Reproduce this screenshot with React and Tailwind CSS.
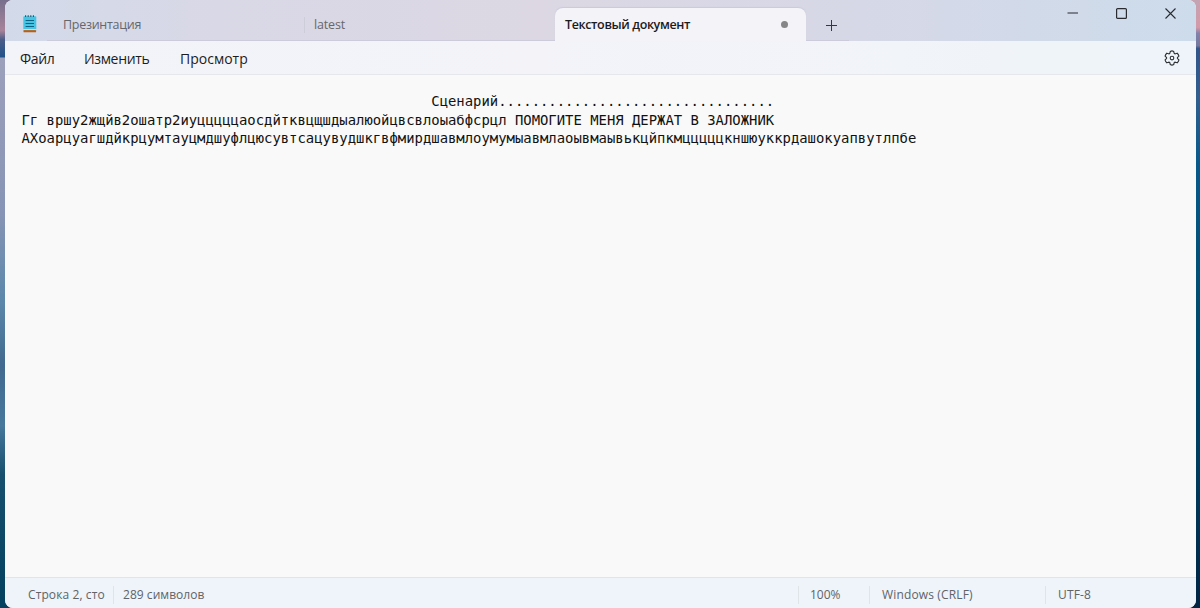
import React from "react";

const documentLines = [
  " ".repeat(49) + "Сценарий.................................",
  "Гг вршу2жщйв2ошатр2иуцццццаосдйтквцщшдыалюойцвсвлоыабфсрцл ПОМОГИТЕ МЕНЯ ДЕРЖАТ В ЗАЛОЖНИК",
  "АХоарцуагшдйкрцумтауцмдшуфлцюсувтсацувудшкгвфмирдшавмлоумумыавмлаоывмаывькцйпкмцццццкншюуккрдашокуапвутлпбе",
];

const NotepadIcon = () => (
  <svg width="14" height="18" viewBox="0 0 14 18" className="shrink-0">
    <rect x="0.5" y="15" width="12.6" height="2.3" rx="0.6" fill="#b5611b" />
    <rect x="0.3" y="1.2" width="13" height="13.4" rx="0.8" fill="#45c4e4" />
    <rect x="0.5" y="14.2" width="12.6" height="0.9" fill="#e4ddd8" />
    <path d="M2.6 0.2v1.9M5.2 0.2v1.9M7.8 0.2v1.9M10.4 0.2v1.9" stroke="#1b5570" strokeWidth="1.1" />
    <path d="M2.6 5.5h8.4M2.6 8.5h8.4M2.6 11.5h8.4" stroke="#0d6285" strokeWidth="1.1" />
  </svg>
);

const GearIcon = () => (
  <svg width="16" height="16" viewBox="0 0 16 16" fill="none" stroke="#303336" strokeWidth="1.15" strokeLinejoin="round">
    <path d="M6.3 1.4Q8 .4 9.7 1.4L10.1 3.2Q10.6 3.9 11.4 3.8L13.2 3.2Q14.6 4.4 14.9 6.1L13.6 7.4Q13.2 8 13.6 8.6L14.9 9.9Q14.6 11.6 13.2 12.8L11.4 12.2Q10.6 12.1 10.1 12.8L9.7 14.6Q8 15.6 6.3 14.6L5.9 12.8Q5.4 12.1 4.6 12.2L2.8 12.8Q1.4 11.6 1.1 9.9L2.4 8.6Q2.8 8 2.4 7.4L1.1 6.1Q1.4 4.4 2.8 3.2L4.6 3.8Q5.4 3.9 5.9 3.2Z" />
    <circle cx="8" cy="8" r="1.8" />
  </svg>
);

const TitleBar = () => (
  <div className="flex h-[41px] shrink-0 bg-[linear-gradient(90deg,#d2daea_0%,#d9d8e6_18%,#dcd7e3_45%,#d6d8e7_72%,#cddceb_100%)] text-[12.5px]">
    <div className="flex w-[42px] pl-[18px] pt-[15px]">
      <NotepadIcon />
    </div>
    <div className="flex h-full w-[508px] items-center border-b border-[#cbcbdc] pt-2.5 text-[#66676c]">
      <div className="w-[257px] pl-4 tracking-[-0.28px]">Презинтация</div>
      <div className="h-4 w-px bg-[#cdccd9]" />
      <div className="pl-[9px] tracking-[-0.15px]">latest</div>
    </div>
    <div className="mt-2 flex w-[251px] items-center justify-between rounded-t-lg bg-[#f3f3f8] pl-[10px] pr-[18.5px] shadow-[0_-1px_1px_#cbcada]">
      <span className="pt-0.5 font-semibold tracking-[-0.37px] text-[#1b1b1d]">Текстовый документ</span>
      <span className="h-[7px] w-[7px] rounded-full bg-[#868689]" />
    </div>
    <div className="h-full w-[43px] border-b border-[#cbcbdc] pl-5 pt-5">
      <svg width="11" height="11" viewBox="0 0 11 11" stroke="#36373b">
        <path d="M5.5 0v11M0 5.5h11" />
      </svg>
    </div>
    <div className="flex flex-1 justify-end gap-[38px] pr-5 pt-2">
      <svg width="11" height="11" viewBox="0 0 11 11" stroke="#292b30">
        <path d="M0.5 5h10.5" />
      </svg>
      <svg width="11" height="11" viewBox="0 0 11 11" fill="none" stroke="#292b30" strokeWidth="1.2">
        <rect x="0.6" y="0.6" width="9.8" height="9.8" rx="1" />
      </svg>
      <svg width="11" height="11" viewBox="0 0 11 11" stroke="#292b30" strokeWidth="1.1">
        <path d="M0.5 0.5l10 10M10.5 0.5l-10 10" />
      </svg>
    </div>
  </div>
);

const MenuBar = () => (
  <div className="flex h-[34px] shrink-0 items-center border-b border-[#e5e7ec] bg-[linear-gradient(90deg,#f2f4f9_0%,#f3f3f8_45%,#f1f4f9_75%,#eef4f9_100%)] pl-[15px] pr-4 text-sm text-[#1d1d1f]">
    <div className="w-[64px] pt-[3px] tracking-[-0.4px]">Файл</div>
    <div className="w-[96px] pt-[3px] tracking-[-0.35px]">Изменить</div>
    <div className="pt-[3px]">Просмотр</div>
    <div className="ml-auto">
      <GearIcon />
    </div>
  </div>
);

const StatusBar = () => (
  <div className="flex h-[31px] shrink-0 items-center border-t border-[#e1e5ea] bg-[#eef4f9] pt-[3px] text-xs text-[#606367]">
    <div className="w-[108px] pl-[23px] tracking-[0.1px]">Строка 2, сто</div>
    <div className="h-[18px] w-px bg-[#dfe4e9]" />
    <div className="pl-[9px] tracking-[0.04px]">289 символов</div>
    <div className="ml-auto h-[18px] w-px bg-[#dfe4e9]" />
    <div className="w-[70px] pl-[11px]">100%</div>
    <div className="h-[18px] w-px bg-[#dfe4e9]" />
    <div className="w-[175px] pl-3 tracking-[0.15px]">Windows (CRLF)</div>
    <div className="h-[18px] w-px bg-[#dfe4e9]" />
    <div className="w-[150px] pl-3 tracking-[0.15px]">UTF-8</div>
  </div>
);

const App = () => {
  return (
    <div className="flex h-[608px] w-[1200px] justify-between overflow-hidden bg-[linear-gradient(180deg,#77708d_0%,#a7839a_5%,#4c5d87_6.5%,#22528a_9.3%,#9ca0bb_9.6%,#8794b5_35%,#5a87aa_50%,#42698f_60%,#46799c_70%,#17506f_78%,#02415f_100%)] font-['Open_Sans','Noto_Sans',sans-serif]">
      <div className="flex flex-1 bg-[linear-gradient(180deg,#c4a3b3_0%,#d39aa8_4.5%,#8082aa_5.5%,#74799f_7.5%,#32558a_8%,#315f8e_16%,#07598a_27%,#004d70_50%,#003e60_75%,#002443_100%)] bg-[length:10px_100%] bg-right bg-no-repeat pl-[5px]">
        <div className="flex h-full w-[1191px] flex-col overflow-hidden rounded-lg bg-[#f9f9f9]">
          <TitleBar />
          <MenuBar />
          <div className="flex-1 whitespace-pre pl-[16.5px] pt-[17px] font-['DejaVu_Sans_Mono',monospace] text-[13.9px] leading-[18.5px] text-[#111111]">
            {documentLines.map((line, i) => (
              <div key={i}>{line}</div>
            ))}
          </div>
          <StatusBar />
        </div>
      </div>
    </div>
  );
};

export default App;
